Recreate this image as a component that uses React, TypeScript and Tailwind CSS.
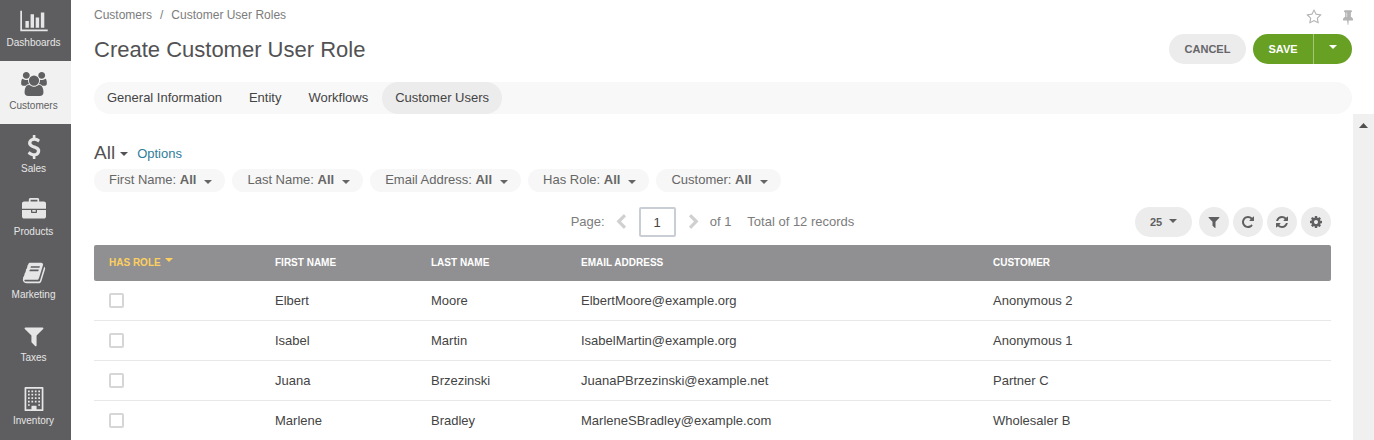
import type { ReactNode } from "react";

type IconProps = { d: string; width?: number; className: string };

function Icon({ d, width = 1792, className }: IconProps) {
  return (
    <svg viewBox={`0 0 ${width} 1792`} className={`${className} fill-current`} aria-hidden="true">
      <path d={d} />
    </svg>
  );
}

function Caret({ className = "" }: { className?: string }) {
  return (
    <svg viewBox="0 0 8 4" className={`h-1 w-2 fill-current ${className}`} aria-hidden="true">
      <path d="M0 0h8L4 4z" />
    </svg>
  );
}

const paths = {
  chart:
    "M640 896v512h-256v-512h256zm384-512v1024h-256v-1024h256zm1024 1152v128h-2048v-1536h128v1408h1920zm-640-896v768h-256v-768h256zm384-384v1152h-256v-1152h256z",
  users:
    "M593 896q-162 5-265 128h-134q-82 0-138-40.5t-56-118.5q0-353 124-353 6 0 43.5 21t97.5 42.5 119 21.5q67 0 133-23-5 37-5 66 0 139 81 256zm1071 637q0 120-73 189.5t-194 69.5h-874q-121 0-194-69.5t-73-189.5q0-53 3.5-103.5t14-109 26.5-108.5 43-97.5 62-81 85.5-53.5 111.5-20q10 0 43 21.5t73 48 107 48 135 21.5 135-21.5 107-48 73-48 43-21.5q61 0 111.5 20t85.5 53.5 62 81 43 97.5 26.5 108.5 14 109 3.5 103.5zm-1024-1277q0 106-75 181t-181 75-181-75-75-181 75-181 181-75 181 75 75 181zm704 384q0 159-112.5 271.5t-271.5 112.5-271.5-112.5-112.5-271.5 112.5-271.5 271.5-112.5 271.5 112.5 112.5 271.5zm576 225q0 78-56 118.5t-138 40.5h-134q-103-123-265-128 81-117 81-256 0-29-5-66 66 23 133 23 59 0 119-21.5t97.5-42.5 43.5-21q124 0 124 353zm-128-609q0 106-75 181t-181 75-181-75-75-181 75-181 181-75 181 75 75 181z",
  dollar:
    "M1362 1185q0 153-99.5 263.5t-258.5 136.5v175q0 14-9 23t-23 9h-135q-13 0-22.5-9.5t-9.5-22.5v-175q-66-9-127.5-31t-101.5-44.5-74-48-46.5-37.5-17.5-18q-17-21-2-41l103-135q7-10 23-12 15-2 24 9l2 2q113 99 243 125 37 8 74 8 81 0 142.5-43t61.5-122q0-28-15-53t-33.5-42-58.5-37.5-66-32-80-32.5q-39-16-61.5-25t-61.5-26.5-62.5-31-56.5-35.5-53.5-42.5-43.5-49-35.5-58-21-66.5-8.5-78q0-138 98-242t255-134v-180q0-13 9.5-22.5t22.5-9.5h135q14 0 23 9t9 23v176q57 6 110.5 23t87 33.5 63.5 37.5 39 29 15 14q17 18 5 38l-81 146q-8 15-23 16-14 3-27-7-3-3-14.5-12t-39-26.5-58.5-32-74.5-26-85.5-11.5q-95 0-155 43t-60 111q0 26 8.5 48t29.5 41.5 39.5 33 56 31 60.5 27 70 27.5q53 20 81 31.5t76 35 75.5 42.5 62 50 53 63.5 31.5 76.5 13 94z",
  briefcase:
    "M640 256h512v-128h-512v128zm1152 640v480q0 66-47 113t-113 47h-1472q-66 0-113-47t-47-113v-480h672v160q0 26 19 45t45 19h320q26 0 45-19t19-45v-160h672zm-768 0v128h-256v-128h256zm768-480v384h-1792v-384q0-66 47-113t113-47h352v-160q0-40 28-68t68-28h576q40 0 68 28t28 68v160h352q66 0 113 47t47 113z",
  book: "M1703 478q40 57 18 129l-275 906q-19 64-76.5 107.5t-122.5 43.5h-923q-77 0-148.5-53.5t-99.5-131.5q-24-67-2-127 0-4 3-27t4-37q1-8-3-21.5t-3-19.5q2-11 8-21t16.5-23.5 16.5-23.5q23-38 45-91.5t30-91.5q3-10 .5-30t-.5-28q3-11 17-28t17-23q21-36 42-92t25-90q1-9-2.5-32t.5-28q4-13 22-30.5t22-22.5q19-26 42.5-84.5t27.5-96.5q1-8-3-25.5t-2-26.5q2-8 9-18t18-23 17-21q8-12 16.5-30.5t15-35 16-36 19.5-32 26.5-23.5 36-11.5 47.5 5.5l-1 3q38-9 51-9h761q74 0 114 56t18 130l-274 906q-36 119-71.5 153.5t-128.5 34.5h-869q-27 0-38 15-11 16-1 43 24 70 144 70h923q29 0 56-15.5t35-41.5l300-987q7-22 5-57 38 15 59 43zm-1064 2q-4 13 2 22.5t20 9.5h608q13 0 25.5-9.5t16.5-22.5l21-64q4-13-2-22.5t-20-9.5h-608q-13 0-25.5 9.5t-16.5 22.5zm-83 256q-4 13 2 22.5t20 9.5h608q13 0 25.5-9.5t16.5-22.5l21-64q4-13-2-22.5t-20-9.5h-608q-13 0-25.5 9.5t-16.5 22.5z",
  filter:
    "M1595 295q17 41-14 70l-493 493v742q0 42-39 59-13 5-25 5-27 0-45-19l-256-256q-19-19-19-45v-486l-493-493q-31-29-14-70 17-39 59-39h1280q42 0 59 39z",
  building:
    "M64 0h1280q64 0 64 64v1664q0 64-64 64h-1280q-64 0-64-64v-1664q0-64 64-64zM128 128v1536h384v-224q0-32 32-32h320q32 0 32 32v224h384v-1536zM256 256h128v128h-128zM512 256h128v128h-128zM768 256h128v128h-128zM1024 256h128v128h-128zM256 512h128v128h-128zM512 512h128v128h-128zM768 512h128v128h-128zM1024 512h128v128h-128zM256 768h128v128h-128zM512 768h128v128h-128zM768 768h128v128h-128zM1024 768h128v128h-128zM256 1024h128v128h-128zM512 1024h128v128h-128zM768 1024h128v128h-128zM1024 1024h128v128h-128zM256 1280h128v128h-128zM1024 1280h128v128h-128z",
  repeat:
    "M1664 256v448q0 26-19 45t-45 19h-448q-42 0-59-40-17-39 14-69l138-138q-148-137-349-137-104 0-198.5 40.5t-163.5 109.5-109.5 163.5-40.5 198.5 40.5 198.5 109.5 163.5 163.5 109.5 198.5 40.5q119 0 225-52t179-147q7-10 23-12 15 0 25 9l137 138q9 8 9.5 20.5t-7.5 22.5q-109 132-264 204.5t-327 72.5q-156 0-298-61t-245-164-164-245-61-298 61-298 164-245 245-164 298-61q147 0 284.5 55.5t244.5 156.5l130-129q29-31 70-14 39 17 39 59z",
  refresh:
    "M1639 1056q0 5-1 7-64 268-268 434.5t-478 166.5q-146 0-282.5-55t-243.5-157l-129 129q-19 19-45 19t-45-19-19-45v-448q0-26 19-45t45-19h448q26 0 45 19t19 45-19 45l-137 137q71 66 161 102t187 36q134 0 250-65t186-179q11-17 53-117 8-23 30-23h192q13 0 22.5 9.5t9.5 22.5zm25-800v448q0 26-19 45t-45 19h-448q-26 0-45-19t-19-45 19-45l138-138q-148-137-349-137-134 0-250 65t-186 179q-11 17-53 117-8 23-30 23h-199q-13 0-22.5-9.5t-9.5-22.5v-7q65-268 270-434.5t480-166.5q146 0 284 55.5t245 156.5l130-129q19-19 45-19t45 19 19 45z",
  cog: "M1152 896q0-106-75-181t-181-75-181 75-75 181 75 181 181 75 181-75 75-181zm512-109v222q0 12-8 23t-20 13l-185 28q-19 54-39 91 35 50 107 138 10 12 10 25t-9 23q-27 37-99 108t-94 71q-12 0-26-9l-138-108q-44 23-91 38-16 136-29 186-7 28-36 28h-222q-14 0-24.5-8.5t-11.5-21.5l-28-184q-49-16-90-37l-141 107q-10 9-25 9-14 0-25-11-126-114-165-168-7-10-7-23 0-12 8-23 15-21 51-66.5t54-70.5q-27-50-41-99l-183-27q-13-2-21-12.5t-8-23.5v-222q0-12 8-23t19-13l186-28q14-46 39-92-40-57-107-138-10-12-10-24 0-10 9-23 26-36 98.5-107.5t94.5-71.5q13 0 26 10l138 107q44-23 91-38 16-136 29-186 7-28 36-28h222q14 0 24.5 8.5t11.5 21.5l28 184q49 16 90 37l142-107q9-9 24-9 13 0 25 10 129 119 165 170 7 8 7 22 0 12-8 23-15 21-51 66.5t-54 70.5q26 50 41 98l183 28q13 2 21 12.5t8 23.5z",
  star: "M1201 1004l306-297-422-62-189-382-189 382-422 62 306 297-73 421 378-199 377 199zm527-357q0 22-26 48l-363 354 86 500q1 7 1 20 0 50-41 50-19 0-40-12l-449-236-449 236q-22 12-40 12-21 0-31.5-14.5t-10.5-35.5q0-6 2-20l86-500-364-354q-25-27-25-48 0-37 56-46l502-73 225-455q19-41 49-41t49 41l225 455 502 73q56 9 56 46z",
  pin: "M800 864v-448q0-14-9-23t-23-9-23 9-9 23v448q0 14 9 23t23 9 23-9 9-23zm672 352q0 26-19 45t-45 19h-429l-51 483q-2 12-10.5 20.5t-20.5 8.5h-1q-27 0-32-27l-76-485h-404q-26 0-45-19t-19-45q0-123 78.5-221.5t177.5-98.5v-512q-52 0-90-38t-38-90 38-90 90-38h640q52 0 90 38t38 90-38 90-90 38v512q99 0 177.5 98.5t78.5 221.5z",
  left: "M1427 301l-531 531 531 531q19 19 19 45t-19 45l-166 166q-19 19-45 19t-45-19l-742-742q-19-19-19-45t19-45l742-742q19-19 45-19t45 19l166 166q19 19 19 45t-19 45z",
  right:
    "M1363 877l-742 742q-19 19-45 19t-45-19l-166-166q-19-19-19-45t19-45l531-531-531-531q-19-19-19-45t19-45l166-166q19-19 45-19t45 19l742 742q19 19 19 45t-19 45z",
};

const navItems = [
  { label: "Dashboards", d: paths.chart, width: 2048, size: "h-6 w-7" },
  { label: "Customers", d: paths.users, width: 1920, size: "h-6 w-[26px]" },
  { label: "Sales", d: paths.dollar, width: 1792, size: "h-6 w-6" },
  { label: "Products", d: paths.briefcase, width: 1792, size: "h-6 w-6" },
  { label: "Marketing", d: paths.book, width: 1792, size: "h-6 w-6" },
  { label: "Taxes", d: paths.filter, width: 1792, size: "h-6 w-6" },
  { label: "Inventory", d: paths.building, width: 1408, size: "h-6 w-5" },
];

const tabs = ["General Information", "Entity", "Workflows", "Customer Users"];
const filters = ["First Name", "Last Name", "Email Address", "Has Role", "Customer"];

const rows = [
  ["Elbert", "Moore", "ElbertMoore@example.org", "Anonymous 2"],
  ["Isabel", "Martin", "IsabelMartin@example.org", "Anonymous 1"],
  ["Juana", "Brzezinski", "JuanaPBrzezinski@example.net", "Partner C"],
  ["Marlene", "Bradley", "MarleneSBradley@example.com", "Wholesaler B"],
];

function Sidebar() {
  return (
    <nav className="w-[71px] shrink-0 bg-[#5e5e60]" aria-label="Main">
      {navItems.map((item) => (
        <a
          key={item.label}
          href="#"
          className={`flex h-[63px] flex-col items-center justify-end gap-1 pr-1 pb-3 text-[10px] leading-3 first:h-[61px] ${
            item.label === "Customers" ? "bg-[#f1f1f1] text-[#606062]" : "text-[#e6e6e6]"
          } ${item.label === "Inventory" ? "[&_path]:[fill-rule:evenodd]" : ""}`}
        >
          <Icon d={item.d} width={item.width} className={item.size} />
          {item.label}
        </a>
      ))}
    </nav>
  );
}

function PageHeader() {
  return (
    <header className="pr-[22px] pl-[23px]">
      <div className="flex h-[34px] items-center justify-between">
        <nav className="flex gap-2 pb-1 text-xs text-[#7c7c7c]" aria-label="Breadcrumb">
          <a href="#">Customers</a>
          <span>/</span>
          <a href="#">Customer User Roles</a>
        </nav>
        <div className="-mr-1 flex gap-[18px] text-[#b4b4b4]">
          <button type="button" aria-label="Add to favorites">
            <Icon d={paths.star} className="size-4" />
          </button>
          <button type="button" aria-label="Pin page">
            <Icon d={paths.pin} className="size-4" />
          </button>
        </div>
      </div>
      <div className="flex h-[30px] items-center justify-between">
        <h1 className="text-[22px] text-[#525254]">Create Customer User Role</h1>
        <div className="flex h-[30px] gap-[7px] text-[11px] font-bold">
          <button type="button" className="w-[77px] rounded-full bg-[#ececec] text-[#66666a]">
            CANCEL
          </button>
          <div className="flex text-white">
            <button type="button" className="w-[60px] rounded-l-full bg-[#67a022]">
              SAVE
            </button>
            <button
              type="button"
              aria-label="More save options"
              className="flex w-[39px] items-center justify-center rounded-r-full border-l border-[#a3c77a] bg-[#67a022] pb-1"
            >
              <Caret />
            </button>
          </div>
        </div>
      </div>
      <div className="mt-[18px] flex h-8 gap-px rounded-full bg-[#f8f8f8] text-[13px] text-[#444]">
        {tabs.map((tab) => (
          <a
            key={tab}
            href="#"
            className={`flex items-center rounded-full px-[13px] ${tab === "Customer Users" ? "bg-[#ececec]" : ""}`}
          >
            {tab}
          </a>
        ))}
      </div>
    </header>
  );
}

function RoundButton({ label, children }: { label: string; children: ReactNode }) {
  return (
    <button
      type="button"
      aria-label={label}
      className="flex size-[30px] items-center justify-center rounded-full bg-[#ececec]"
    >
      {children}
    </button>
  );
}

function Toolbar() {
  return (
    <div className="mt-[15px] grid h-[30px] grid-cols-[1fr_auto_1fr] items-center text-[13px] text-[#7c7c7c]">
      <div className="col-start-2 flex items-center">
        <label htmlFor="page-number">Page:</label>
        <button type="button" aria-label="Previous page" className="ml-2 text-[#d0d0d0]">
          <Icon d={paths.left} className="h-4 w-4" />
        </button>
        <input
          id="page-number"
          type="text"
          defaultValue="1"
          className="mx-[10px] h-[30px] w-[37px] rounded-xs border-2 border-[#c8ced3] text-center text-[#444]"
        />
        <button type="button" aria-label="Next page" className="text-[#d0d0d0]">
          <Icon d={paths.right} className="h-4 w-4" />
        </button>
        <span className="ml-2">of 1</span>
        <span className="ml-4">Total of 12 records</span>
      </div>
      <div className="flex items-center justify-end gap-1 text-[#5f5f61]">
        <div className="relative mr-[3px]">
          <select
            aria-label="Records per page"
            className="h-[30px] w-[57px] appearance-none rounded-full bg-[#ececec] pl-[15px] text-[11px] font-bold"
          >
            <option>25</option>
          </select>
          <Caret className="pointer-events-none absolute top-3 right-[15px]" />
        </div>
        <RoundButton label="Toggle filters">
          <Icon d={paths.filter} className="size-[14px]" />
        </RoundButton>
        <RoundButton label="Refresh">
          <Icon d={paths.repeat} className="size-[14px]" />
        </RoundButton>
        <RoundButton label="Reset">
          <Icon d={paths.refresh} className="size-[14px]" />
        </RoundButton>
        <RoundButton label="Grid settings">
          <Icon d={paths.cog} className="size-[14px]" />
        </RoundButton>
      </div>
    </div>
  );
}

function UserGrid() {
  return (
    <table className="mt-2 w-full table-fixed border-separate border-spacing-0 text-left text-[13px] text-[#444]">
      <thead>
        <tr className="h-9 text-[10px] text-white *:bg-[#909092] *:px-[15px] *:pb-[2px]">
          <th className="w-[166px] rounded-l-xs text-[#fccf5f]" aria-sort="descending">
            <button type="button" className="flex items-center gap-1 font-bold">
              HAS ROLE
              <Caret className="mb-1" />
            </button>
          </th>
          <th className="w-[156px]">FIRST NAME</th>
          <th className="w-[150px]">LAST NAME</th>
          <th className="w-[412px]">EMAIL ADDRESS</th>
          <th className="rounded-r-xs">CUSTOMER</th>
        </tr>
      </thead>
      <tbody>
        {rows.map((row) => (
          <tr key={row[0]} className="h-10 *:border-b *:border-[#e8e8e8] *:px-[15px]">
            <td>
              <input
                type="checkbox"
                aria-label={`${row[0]} ${row[1]} has role`}
                className="block size-[15px] appearance-none rounded-xs border-2 border-[#d6d6d6] bg-white checked:bg-[#67a022]"
              />
            </td>
            {row.map((cell) => (
              <td key={cell}>{cell}</td>
            ))}
          </tr>
        ))}
      </tbody>
    </table>
  );
}

export default function App() {
  return (
    <div className="flex h-screen overflow-hidden bg-white font-['Liberation_Sans',Arial,sans-serif]">
      <Sidebar />
      <div className="flex min-w-0 flex-1 flex-col">
        <PageHeader />
        <div className="flex min-h-0 flex-1">
          <main className="min-w-0 flex-1 overflow-hidden pt-7 pr-[22px] pl-[23px]">
            <div className="flex h-[23px] items-center gap-[9px] text-[13px]">
              <button type="button" className="flex items-center gap-[5px] text-[19px] text-[#525254]">
                All
                <Caret />
              </button>
              <a href="#" className="text-[#2f7d9a]">
                Options
              </a>
            </div>
            <div className="mt-1 flex gap-[7px] text-[13px] text-[#666]">
              {filters.map((name) => (
                <button
                  key={name}
                  type="button"
                  className="flex h-[23px] items-center rounded-full bg-[#f7f7f7] pr-[13px] pb-[2px] pl-[15px] whitespace-pre"
                >
                  {name}: <b>All</b>
                  <Caret className="mt-1 ml-2" />
                </button>
              ))}
            </div>
            <Toolbar />
            <UserGrid />
          </main>
          <div className="flex w-[21px] shrink-0 justify-center bg-[#f0f0f0] pt-[9px] text-[#505050]">
            <svg viewBox="0 0 9 5" className="h-[5px] w-[9px] fill-current" aria-hidden="true">
              <path d="M4.500 0L9 5H0z" />
            </svg>
          </div>
        </div>
      </div>
    </div>
  );
}
